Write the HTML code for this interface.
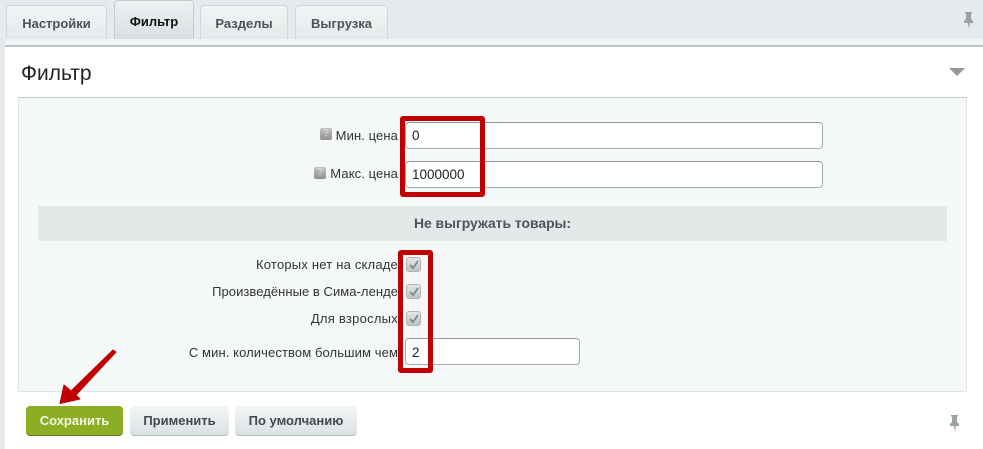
<!DOCTYPE html>
<html><head><meta charset="utf-8">
<style>
html,body{margin:0;padding:0}
body{width:983px;height:449px;position:relative;overflow:hidden;background:#fff;font-family:"Liberation Sans",sans-serif;color:#222}
.a{position:absolute}
.tab{position:absolute;top:5px;height:34px;box-sizing:border-box;border:1px solid #d0d7d8;border-bottom:none;border-radius:4px 4px 0 0;background:linear-gradient(#f2f5f5,#e3e9ea);font-weight:bold;font-size:13px;color:#4b5559;text-align:center;line-height:36px}
.tab.on{top:0;background:linear-gradient(#eef1f2,#d9dfe1);color:#111;line-height:42px;height:39px;border-color:#c4cbcd}
.lbl{position:absolute;font-size:13px;line-height:16px;color:#333;text-align:right;white-space:nowrap}
.inp{position:absolute;box-sizing:border-box;background:#fff;border:1px solid #a4acaf;border-top-color:#8f979a;border-radius:4px;font-size:13.5px;line-height:26px;padding-left:6px;color:#222}
.hint{position:absolute;width:12px;height:12px;background:linear-gradient(#c4c4c4,#8f8f8f);border-radius:2px;color:#e2e2e2;font-size:10px;line-height:12px;text-align:center}
.cb{position:absolute;left:406px;width:15px;height:15px;box-sizing:border-box;border:1px solid #aeb4b6;border-radius:3px;background:linear-gradient(#e4e7e8,#bdc2c4)}
.btn{position:absolute;top:406px;height:30px;box-sizing:border-box;border-radius:4px;background:linear-gradient(#f4f6f6,#dbe1e3);border-bottom:1px solid #b5bcbe;font-weight:bold;font-size:13px;color:#3f4a4e;text-align:center;line-height:29px}
.red{position:absolute;box-sizing:border-box;border:5px solid #c00000;border-radius:3px}
</style></head><body>
<div class="a" style="left:0;top:0;width:983px;height:47px;background:#e5ebec"></div>
<div class="a" style="left:0;top:47px;width:5px;height:402px;background:#e5ebec"></div>
<div class="a" style="left:5px;top:39px;width:978px;height:6px;background:#f0f3f4"></div>
<div class="a" style="left:5px;top:45px;width:978px;height:2px;background:#bcc3c5"></div>

<div class="tab" style="left:6px;width:101px">Настройки</div>
<div class="tab on" style="left:114px;width:80px">Фильтр</div>
<div class="tab" style="left:200px;width:88px">Разделы</div>
<div class="tab" style="left:295px;width:93px">Выгрузка</div>

<svg class="a" style="left:961px;top:11px" width="16" height="18" viewBox="0 0 16 18"><path d="M4 1h7v1l-1 1v5l2 2v2H9l-1 6-1-6H3v-2l2-2V3L4 2z" fill="#9aa2a4"/></svg>

<div class="a" style="left:21px;top:61px;font-size:21px;line-height:26px;color:#222">Фильтр</div>
<svg class="a" style="left:948px;top:67px" width="18" height="10"><path d="M1 1h16l-8 8z" fill="#8f979a"/></svg>

<div class="a" style="left:18px;top:97px;width:949px;height:295px;box-sizing:border-box;background:#f5f8f9;border:1px solid #dfe5e6;border-top-color:#c6cccd"></div>

<div class="hint" style="left:320px;top:128px">?</div>
<div class="lbl" style="right:585px;top:128px;letter-spacing:.1px">Мин. цена</div>
<div class="inp" style="left:405px;top:122px;width:418px;height:27px">0</div>
<div class="hint" style="left:314px;top:167px">?</div>
<div class="lbl" style="right:585px;top:166px;letter-spacing:.1px">Макс. цена</div>
<div class="inp" style="left:405px;top:161px;width:418px;height:27px">1000000</div>

<div class="a" style="left:38px;top:206px;width:909px;height:35px;background:#e2e9e8;font-weight:bold;font-size:13.9px;color:#4b5559;text-align:center;line-height:35px">Не выгружать товары:</div>

<div class="lbl" style="right:585px;top:257px;letter-spacing:.2px">Которых нет на складе</div>
<div class="cb" style="top:257px"></div>
<div class="lbl" style="right:585px;top:284px;letter-spacing:.05px">Произведённые в Сима-ленде</div>
<div class="cb" style="top:284px"></div>
<div class="lbl" style="right:585px;top:311px;letter-spacing:.25px">Для взрослых</div>
<div class="cb" style="top:311px"></div>
<svg class="a" style="left:406px;top:257px" width="15" height="70" fill="none" stroke="#7b8385" stroke-width="1.6"><path d="M4 8l3 3 5-7M4 35l3 3 5-7M4 62l3 3 5-7"/></svg>
<div class="lbl" style="right:585px;top:345px;letter-spacing:.1px">С мин. количеством большим чем</div>
<div class="inp" style="left:405px;top:338px;width:175px;height:27px;line-height:27px">2</div>

<div class="red" style="left:400px;top:116px;width:85px;height:81px"></div>
<div class="red" style="left:398px;top:250px;width:35px;height:123px"></div>

<div class="btn" style="left:26px;width:97px;background:#8cae24;border-bottom:1px solid #5f7a16;color:#f4f7e6">Сохранить</div>
<div class="btn" style="left:130px;width:99px">Применить</div>
<div class="btn" style="left:235px;width:122px">По умолчанию</div>
<svg class="a" style="left:947px;top:414px" width="16" height="18" viewBox="0 0 16 18"><path d="M4 1h7v1l-1 1v5l2 2v2H9l-1 6-1-6H3v-2l2-2V3L4 2z" fill="#9aa2a4"/></svg>
<svg class="a" style="left:0;top:340px" width="130" height="70"><path d="M60 63.500L64 45 71 51 113 10 116 12 76 55 80 59z" fill="#c00000" stroke="#c00000" stroke-linejoin="round"/></svg>
</body></html>
